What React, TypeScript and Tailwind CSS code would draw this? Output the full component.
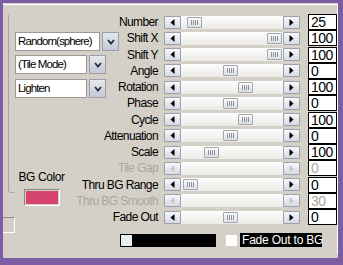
import React from "react";

type Row = {
  label: string;
  value: string;
  thumb: number | null;
  disabled?: boolean;
};

const rows: Row[] = [
  { label: "Number", value: "25", thumb: 6 },
  { label: "Shift X", value: "100", thumb: 86 },
  { label: "Shift Y", value: "100", thumb: 86 },
  { label: "Angle", value: "0", thumb: 42 },
  { label: "Rotation", value: "100", thumb: 57 },
  { label: "Phase", value: "0", thumb: 42 },
  { label: "Cycle", value: "100", thumb: 57 },
  { label: "Attenuation", value: "0", thumb: 42 },
  { label: "Scale", value: "100", thumb: 23 },
  { label: "Tile Gap", value: "0", thumb: null, disabled: true },
  { label: "Thru BG Range", value: "0", thumb: 2 },
  { label: "Thru BG Smooth", value: "30", thumb: null, disabled: true },
  { label: "Fade Out", value: "0", thumb: 42 },
];

function Arrow({ dir, disabled }: { dir: "l" | "r"; disabled?: boolean }) {
  return (
    <div className="w-[17px] h-[13px] flex items-center justify-center border border-[#9aa0aa] rounded-[1px] bg-gradient-to-b from-[#f6f8fa] to-[#d6dbe4]">
      <svg width="5" height="7" viewBox="0 0 5 7">
        {dir === "l" ? (
          <polygon points="4.5,0 0.5,3.5 4.5,7" fill={disabled ? "#c4c4c4" : "#000"} />
        ) : (
          <polygon points="0.5,0 4.5,3.5 0.5,7" fill={disabled ? "#c4c4c4" : "#000"} />
        )}
      </svg>
    </div>
  );
}

function Thumb() {
  return (
    <div className="w-[15px] h-[11px] flex items-center justify-center gap-[1px] border border-[#a3a6ad] rounded-[1px] bg-gradient-to-b from-[#fbfbfc] to-[#dcdfe6]">
      <span className="w-px h-[5px] bg-[#8d919a]" />
      <span className="w-px h-[5px] bg-[#8d919a]" />
      <span className="w-px h-[5px] bg-[#8d919a]" />
      <span className="w-px h-[5px] bg-[#8d919a]" />
    </div>
  );
}

function Slider({ thumb, disabled }: { thumb: number | null; disabled?: boolean }) {
  return (
    <div className="flex items-center">
      <Arrow dir="l" disabled={disabled} />
      <div className="w-[102px] h-[13px] flex items-center bg-gradient-to-b from-[#fdfdfd] to-[#ebeae6]">
        {thumb !== null && (
          <div style={{ marginLeft: thumb }}>
            <Thumb />
          </div>
        )}
      </div>
      <Arrow dir="r" disabled={disabled} />
    </div>
  );
}

function Combo({ text, field, top }: { text: string; field: number; top: number }) {
  return (
    <div className="flex items-stretch h-[19px]" style={{ marginTop: top }}>
      <div
        className="bg-white border border-[#9c9a94] flex items-center pl-[2px] text-[11.5px] tracking-[-0.9px] leading-none text-black whitespace-nowrap"
        style={{ width: field }}
      >
        {text}
      </div>
      <div className="ml-[2px] w-[17px] border border-[#9aa0aa] bg-gradient-to-b from-[#e4e8ee] to-[#c4cad4] flex items-center justify-center">
        <svg width="8" height="6" viewBox="0 0 8 6">
          <polyline points="1,1 4,4.5 7,1" fill="none" stroke="#2a2a3a" strokeWidth="1.8" />
        </svg>
      </div>
    </div>
  );
}

export default function App() {
  return (
    <div className="w-[343px] h-[265px] bg-[#7c5da4] pl-[3px] pt-[3px] pr-[5px] pb-[7px] font-['Liberation_Sans',Arial,sans-serif]">
      <div className="w-[335px] h-[255px] bg-[#d4d0c8] grid overflow-hidden">
        {/* decorative frames */}
        <div className="col-start-1 row-start-1 mt-[1px] h-[250px] border-t border-r border-white" />
        <div className="col-start-1 row-start-1 ml-[5px] mt-[12px] w-[6px] h-[178px] border-l border-b border-[#a8a49c] rounded-bl-[3px]" />
        <div className="col-start-1 row-start-1 mt-[214px] w-[12px] h-[16px] border-t border-[#8f8b85] border-r border-b border-r-white border-b-white" />

        {/* left column */}
        <div className="col-start-1 row-start-1 pl-[12px] flex flex-col items-start">
          <Combo text="Random(sphere)" field={85} top={29} />
          <Combo text="(Tile Mode)" field={72} top={4} />
          <Combo text="Lighten" field={72} top={5} />
          <div className="ml-[3px] mt-[72px] w-[47px] flex flex-col items-center">
            <div className="text-[12px] tracking-[-0.4px] leading-[15px] text-black whitespace-nowrap">BG Color</div>
            <div className="mt-[4px] w-[36px] h-[17px] border border-[#8a8680] border-r-white border-b-white p-[1px]">
              <div className="w-full h-full bg-[#d5436f]" />
            </div>
          </div>
        </div>

        {/* right panel */}
        <div className="col-start-1 row-start-1 pt-[11px] flex flex-col">
          {rows.map((r) => (
            <div key={r.label} className="h-[16.25px] flex items-center">
              <div
                className={`w-[155px] text-right text-[12px] tracking-[-0.6px] leading-none whitespace-nowrap ${
                  r.disabled ? "text-[#a8a6a0]" : "text-black"
                }`}
              >
                {r.label}
              </div>
              <div className="ml-[6px]">
                <Slider thumb={r.thumb} disabled={r.disabled} />
              </div>
              <div
                className={`ml-[8px] w-[29px] h-[16px] bg-white border border-black flex items-center pl-[2px] text-[14px] tracking-[-0.5px] leading-none ${
                  r.disabled ? "text-[#a8a6a0]" : "text-black"
                }`}
              >
                {r.value}
              </div>
            </div>
          ))}
          <div className="mt-[8px] flex items-center">
            <div className="ml-[117px] w-[96px] h-[13px] bg-black flex items-center pl-[1px]">
              <div className="w-[11px] h-[11px] bg-[#e6f0f2]" />
            </div>
            <div className="ml-[10px] w-[11px] h-[11px] bg-white" />
            <div className="ml-[3px] w-[82px] h-[14px] bg-black text-white text-[12px] tracking-[-0.2px] leading-none flex items-center pl-[2px] whitespace-nowrap">
              Fade Out to BG
            </div>
          </div>
        </div>
      </div>
    </div>
  );
}
